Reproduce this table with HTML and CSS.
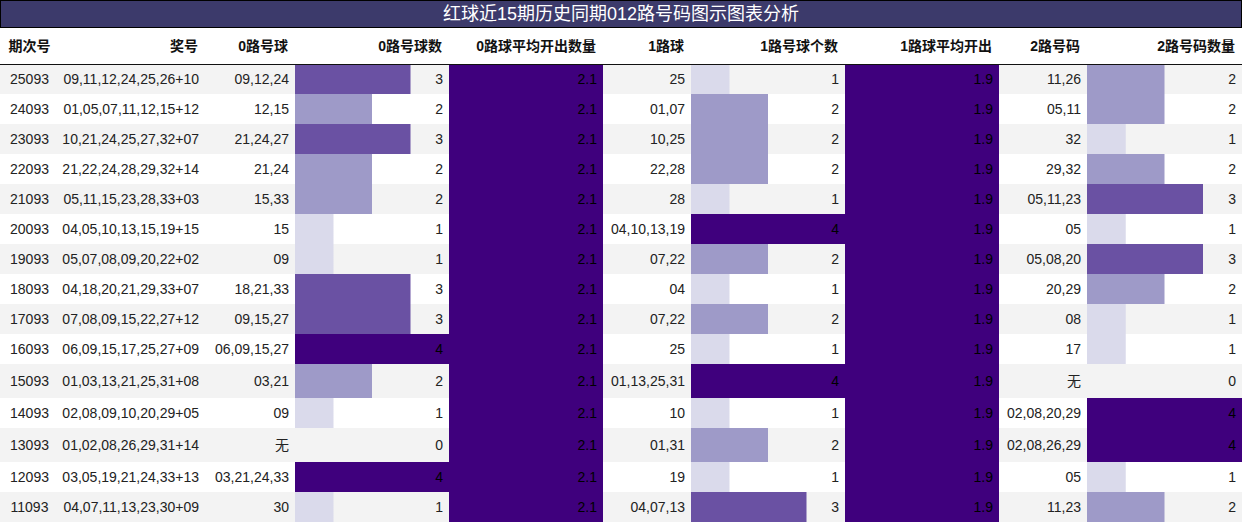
FILE: index.html
```html
<!DOCTYPE html>
<html lang="zh">
<head>
<meta charset="utf-8">
<title>红球近15期历史同期012路号码图示图表分析</title>
<link rel="stylesheet" href="styles.css">
</head>
<body>
<div class="title">红球近15期历史同期012路号码图示图表分析</div>
<table class="grid">
<colgroup>
<col class="c-issue"><col class="c-prize"><col class="c-num"><col class="c-bar"><col class="c-bar">
<col class="c-num2"><col class="c-bar"><col class="c-bar"><col class="c-num2"><col class="c-last">
</colgroup>
<thead>
<tr>
<th class="center">期次号</th><th>奖号</th><th>0路号球</th><th>0路号球数</th><th>0路球平均开出数量</th>
<th>1路球</th><th>1路号球个数</th><th>1路球平均开出</th><th>2路号码</th><th>2路号码数量</th>
</tr>
</thead>
<tbody>
<tr><td class="center">25093</td><td>09,11,12,24,25,26+10</td><td>09,12,24</td><td class="bar v3" style="--w:75%">3</td><td class="avg">2.1</td><td>25</td><td class="bar v1" style="--w:25%">1</td><td class="avg">1.9</td><td>11,26</td><td class="bar v2" style="--w:50%">2</td></tr>
<tr><td class="center">24093</td><td>01,05,07,11,12,15+12</td><td>12,15</td><td class="bar v2" style="--w:50%">2</td><td class="avg">2.1</td><td>01,07</td><td class="bar v2" style="--w:50%">2</td><td class="avg">1.9</td><td>05,11</td><td class="bar v2" style="--w:50%">2</td></tr>
<tr><td class="center">23093</td><td>10,21,24,25,27,32+07</td><td>21,24,27</td><td class="bar v3" style="--w:75%">3</td><td class="avg">2.1</td><td>10,25</td><td class="bar v2" style="--w:50%">2</td><td class="avg">1.9</td><td>32</td><td class="bar v1" style="--w:25%">1</td></tr>
<tr><td class="center">22093</td><td>21,22,24,28,29,32+14</td><td>21,24</td><td class="bar v2" style="--w:50%">2</td><td class="avg">2.1</td><td>22,28</td><td class="bar v2" style="--w:50%">2</td><td class="avg">1.9</td><td>29,32</td><td class="bar v2" style="--w:50%">2</td></tr>
<tr><td class="center">21093</td><td>05,11,15,23,28,33+03</td><td>15,33</td><td class="bar v2" style="--w:50%">2</td><td class="avg">2.1</td><td>28</td><td class="bar v1" style="--w:25%">1</td><td class="avg">1.9</td><td>05,11,23</td><td class="bar v3" style="--w:75%">3</td></tr>
<tr><td class="center">20093</td><td>04,05,10,13,15,19+15</td><td>15</td><td class="bar v1" style="--w:25%">1</td><td class="avg">2.1</td><td>04,10,13,19</td><td class="bar v4" style="--w:100%">4</td><td class="avg">1.9</td><td>05</td><td class="bar v1" style="--w:25%">1</td></tr>
<tr><td class="center">19093</td><td>05,07,08,09,20,22+02</td><td>09</td><td class="bar v1" style="--w:25%">1</td><td class="avg">2.1</td><td>07,22</td><td class="bar v2" style="--w:50%">2</td><td class="avg">1.9</td><td>05,08,20</td><td class="bar v3" style="--w:75%">3</td></tr>
<tr><td class="center">18093</td><td>04,18,20,21,29,33+07</td><td>18,21,33</td><td class="bar v3" style="--w:75%">3</td><td class="avg">2.1</td><td>04</td><td class="bar v1" style="--w:25%">1</td><td class="avg">1.9</td><td>20,29</td><td class="bar v2" style="--w:50%">2</td></tr>
<tr><td class="center">17093</td><td>07,08,09,15,22,27+12</td><td>09,15,27</td><td class="bar v3" style="--w:75%">3</td><td class="avg">2.1</td><td>07,22</td><td class="bar v2" style="--w:50%">2</td><td class="avg">1.9</td><td>08</td><td class="bar v1" style="--w:25%">1</td></tr>
<tr><td class="center">16093</td><td>06,09,15,17,25,27+09</td><td>06,09,15,27</td><td class="bar v4" style="--w:100%">4</td><td class="avg">2.1</td><td>25</td><td class="bar v1" style="--w:25%">1</td><td class="avg">1.9</td><td>17</td><td class="bar v1" style="--w:25%">1</td></tr>
<tr class="tall"><td class="center">15093</td><td>01,03,13,21,25,31+08</td><td>03,21</td><td class="bar v2" style="--w:50%">2</td><td class="avg">2.1</td><td>01,13,25,31</td><td class="bar v4" style="--w:100%">4</td><td class="avg">1.9</td><td>无</td><td class="bar">0</td></tr>
<tr><td class="center">14093</td><td>02,08,09,10,20,29+05</td><td>09</td><td class="bar v1" style="--w:25%">1</td><td class="avg">2.1</td><td>10</td><td class="bar v1" style="--w:25%">1</td><td class="avg">1.9</td><td>02,08,20,29</td><td class="bar v4" style="--w:100%">4</td></tr>
<tr class="tall"><td class="center">13093</td><td>01,02,08,26,29,31+14</td><td>无</td><td class="bar">0</td><td class="avg">2.1</td><td>01,31</td><td class="bar v2" style="--w:50%">2</td><td class="avg">1.9</td><td>02,08,26,29</td><td class="bar v4" style="--w:100%">4</td></tr>
<tr><td class="center">12093</td><td>03,05,19,21,24,33+13</td><td>03,21,24,33</td><td class="bar v4" style="--w:100%">4</td><td class="avg">2.1</td><td>19</td><td class="bar v1" style="--w:25%">1</td><td class="avg">1.9</td><td>05</td><td class="bar v1" style="--w:25%">1</td></tr>
<tr><td class="center">11093</td><td>04,07,11,13,23,30+09</td><td>30</td><td class="bar v1" style="--w:25%">1</td><td class="avg">2.1</td><td>04,07,13</td><td class="bar v3" style="--w:75%">3</td><td class="avg">1.9</td><td>11,23</td><td class="bar v2" style="--w:50%">2</td></tr>
</tbody>
</table>
</body>
</html>
```
FILE: styles.css
```css
* { box-sizing: border-box; }
html, body {
  margin: 0;
  padding: 0;
  background: #fff;
}
body {
  font-family: "Liberation Sans", Arial, "Noto Sans CJK SC", sans-serif;
  font-size: 14px;
  color: #222;
  width: 1242px;
}
.title {
  height: 28px;
  border: 1px solid #000;
  background: #3c3a6b;
  color: #fff;
  font-size: 18px;
  line-height: 26px;
  text-align: center;
  white-space: nowrap;
}
.grid {
  width: 1242px;
  table-layout: fixed;
  border-collapse: collapse;
  border-spacing: 0;
}
.c-issue { width: 59px; }
.c-prize { width: 146px; }
.c-num { width: 90px; }
.c-bar { width: 154px; }
.c-num2 { width: 88px; }
.c-last { width: 155px; }

.grid th {
  height: 36px;
  padding: 0 7px 0 0;
  font-weight: bold;
  font-size: 14px;
  color: #111;
  text-align: right;
  white-space: nowrap;
  border-bottom: 1px solid #111;
  line-height: 16px;
}
.grid td {
  height: 30px;
  padding: 0 6px 0 0;
  text-align: right;
  white-space: nowrap;
  line-height: 16px;
  overflow: hidden;
}
.grid tr.tall td { height: 34px; }
.grid th.center, .grid td.center {
  text-align: center;
  padding: 0;
}
.grid tbody tr:nth-child(odd) { background: #f3f3f3; }
.grid tbody tr:nth-child(even) { background: #fff; }

.bar {
  background-repeat: no-repeat;
  background-position: left top;
  background-size: var(--w, 0%) 100%;
}
.bar.v1 { background-image: linear-gradient(#dadaeb, #dadaeb); }
.bar.v2 { background-image: linear-gradient(#9e9ac8, #9e9ac8); }
.bar.v3 { background-image: linear-gradient(#6a51a3, #6a51a3); }
.bar.v4 {
  background-image: linear-gradient(#3f007d, #3f007d);
  color: #000;
}
.grid td.avg {
  background: #3f007d;
  color: #000;
}
```
